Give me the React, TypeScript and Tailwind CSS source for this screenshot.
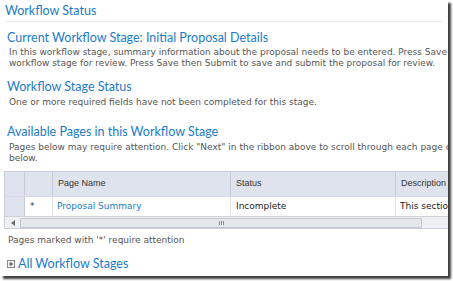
export default function App() {
  const head = "text-[#1b7bc9] text-[12.5px] leading-[16px] [font-family:Lato,'Noto_Sans',sans-serif]";
  const body = "text-[#555] text-[9px] leading-[11px] [font-family:'DejaVu_Sans',Verdana,sans-serif]";
  return (
    <div className="w-[453px] h-[281px] bg-white overflow-hidden">
      <div className="w-[448px] h-[276px] bg-white overflow-hidden shadow-[3px_3px_2px_rgba(0,0,0,0.75)] flex flex-col">
        <div className="px-[5px] pt-[3px]">
          <h2 className={head}>Workflow Status</h2>
          <hr className="mt-[2px] border-[#ececec]" />
        </div>

        <div className="px-[7px] pt-[8px]">
          <h3 className={head}>Current Workflow Stage: Initial Proposal Details</h3>
          <p className={`${body} pl-[2px] pt-[1px] whitespace-nowrap`}>
            In this workflow stage, summary information about the proposal needs to be entered. Press Save
            <br />
            workflow stage for review. Press Save then Submit to save and submit the proposal for review.
          </p>
        </div>

        <div className="px-[7px] pt-[10px]">
          <h3 className={head}>Workflow Stage Status</h3>
          <p className={`${body} pl-[2px] pt-[2px]`}>
            One or more required fields have not been completed for this stage.
          </p>
        </div>

        <div className="px-[7px] pt-[16px]">
          <h3 className={head}>Available Pages in this Workflow Stage</h3>
          <p className={`${body} pl-[2px] pt-[2px] whitespace-nowrap`}>
            Pages below may require attention. Click "Next" in the ribbon above to scroll through each page of
            <br />
            below.
          </p>
        </div>

        <div className="ml-[4px] mt-[7px] w-[460px] border border-[#c9ced8] border-r-0">
          <div className="flex h-[24px] bg-[#dfe3ee] text-[#333] text-[9px] [font-family:'Liberation_Sans',Arial,sans-serif]">
            <div className="w-[20px] border-r border-[#c5cad6]" />
            <div className="w-[28px] border-r border-[#c5cad6]" />
            <div className="w-[178px] border-r border-[#c5cad6] flex items-center pl-[5px]">Page Name</div>
            <div className="w-[165px] border-r border-[#c5cad6] flex items-center pl-[5px]">Status</div>
            <div className="flex-1 flex items-center pl-[5px]">Description</div>
          </div>
          <div className="flex h-[20px] border-t border-[#d6dae2] text-[9px] [font-family:'DejaVu_Sans',Verdana,sans-serif]">
            <div className="w-[20px] bg-[#dfe3ee] border-r border-[#c5cad6]" />
            <div className="w-[28px] border-r border-[#e2e2e2] flex items-center pl-[5px] text-[#333]">*</div>
            <div className="w-[178px] border-r border-[#e2e2e2] flex items-center pl-[4px] text-[#1b7bc9]">Proposal Summary</div>
            <div className="w-[165px] border-r border-[#e2e2e2] flex items-center pl-[5px] text-[#222]">Incomplete</div>
            <div className="flex-1 flex items-center pl-[4px] text-[#222] whitespace-nowrap">This section</div>
          </div>
          <div className="flex items-center h-[12px] bg-[#eef0f3] border-t border-[#d0d4da]">
            <div className="w-[15px] flex items-center justify-center">
              <svg width="4" height="6" viewBox="0 0 4 6"><path d="M4 0 L0 3 L4 6 Z" fill="#6b6b6b" /></svg>
            </div>
            <div className="w-[402px] h-[10px] bg-[#e4e7ec] border border-[#c3c8d0] rounded-[1px] flex items-center justify-center gap-[1px]">
              <span className="w-[1px] h-[4px] bg-[#8a8a8a]" />
              <span className="w-[1px] h-[4px] bg-[#8a8a8a]" />
              <span className="w-[1px] h-[4px] bg-[#8a8a8a]" />
            </div>
          </div>
        </div>

        <p className={`${body} pl-[8px] pt-[6px]`}>Pages marked with '*' require attention</p>

        <div className="flex items-center pl-[7px] pt-[10px] gap-[3px]">
          <span className="w-[8px] h-[8px] border border-[#8a8a8a] bg-[#f4f4f4] flex items-center justify-center">
            <svg width="6" height="6" viewBox="0 0 6 6"><path d="M1 3 H5 M3 1 V5" stroke="#444" strokeWidth="1" /></svg>
          </span>
          <span className={head}>All Workflow Stages</span>
        </div>
      </div>
    </div>
  );
}
